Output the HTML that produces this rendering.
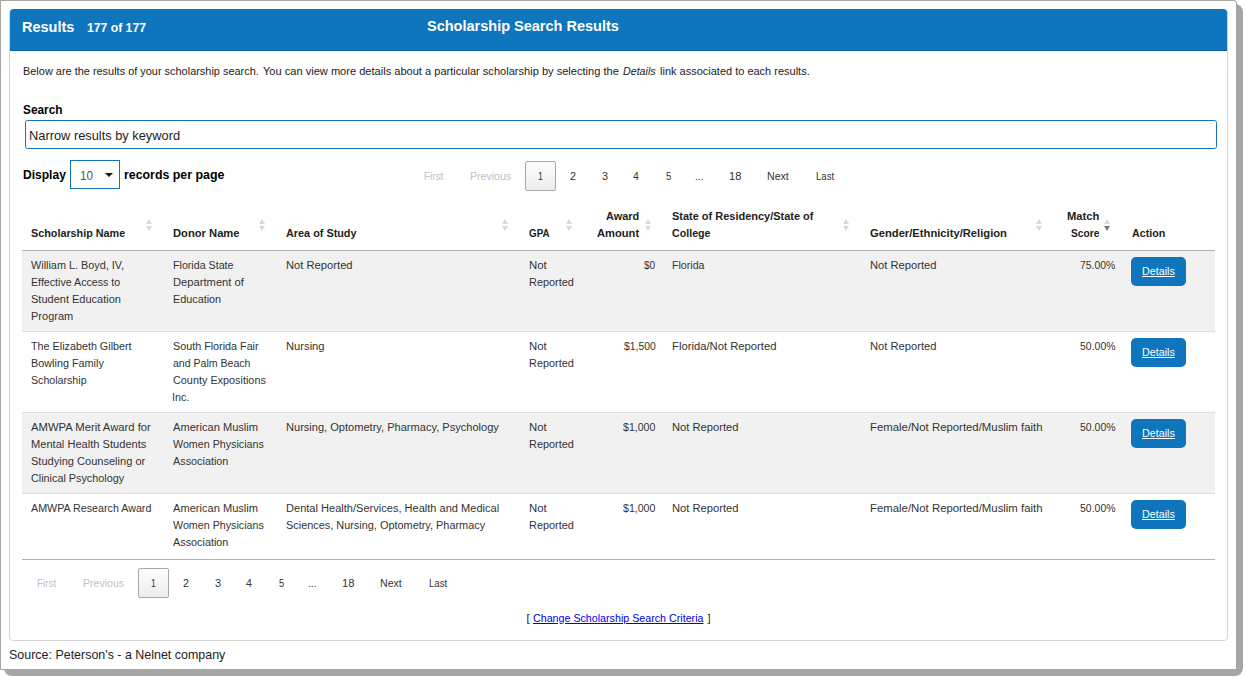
<!DOCTYPE html>
<html>
<head>
<meta charset="utf-8">
<title>Scholarship Search Results</title>
<style>
html,body{margin:0;padding:0;}
body{width:1247px;height:680px;position:relative;overflow:hidden;background:#fff;font-family:"Liberation Sans",sans-serif;color:#222;}
.t{position:absolute;white-space:nowrap;line-height:16px;transform-origin:0 50%;}
div{box-sizing:border-box;}
/* outer screenshot frame with drop shadow */
#shadow{position:absolute;left:4px;top:4px;width:1239px;height:672px;background:#a5a5a5;border-radius:8px;}
#frame{position:absolute;left:0;top:0;width:1237px;height:670px;background:#fff;border:1px solid #a5a5a5;border-top-right-radius:3px;}
/* panel */
#panel{position:absolute;left:9px;top:9px;width:1219px;height:632px;border:1px solid #d3d3d3;border-radius:4px;background:#fff;}
#phead{position:absolute;left:10px;top:9px;width:1217px;height:42px;background:#0f75bc;border-radius:4px 4px 0 0;border-bottom:1px solid #0b62a0;}
#inp{position:absolute;left:25px;top:120px;width:1192px;height:29px;border:1px solid #1272bc;border-radius:2.5px;background:#fff;}
#sel{position:absolute;left:70px;top:160px;width:50px;height:29px;border:1px solid #1272bc;border-radius:0;background:#fff;}
#sel:after{content:"";position:absolute;left:34px;top:11.6px;border-left:4.3px solid transparent;border-right:4.3px solid transparent;border-top:4.6px solid #111;}
.pgbox{position:absolute;width:31px;height:30px;border:1px solid #a8a8a8;border-radius:2px;background:linear-gradient(#fdfdfd,#ededed);}
.stripe{position:absolute;left:22px;width:1193px;background:#f1f1f1;}
.line{position:absolute;left:22px;width:1193px;height:1px;}
.btn{position:absolute;left:1131px;width:55px;height:29px;background:#0f75bc;border-radius:5px;}
.sort{position:absolute;width:8px;height:13px;}
.sort:before{content:"";position:absolute;left:0;top:0;border-left:3.75px solid transparent;border-right:3.75px solid transparent;border-bottom:5.6px solid #dadada;}
.sort:after{content:"";position:absolute;left:0;top:6.9px;border-left:3.75px solid transparent;border-right:3.75px solid transparent;border-top:5.6px solid #dadada;}
.sort.desc:after{border-top-color:#77777a;}
</style>
</head>
<body>
<div id="shadow"></div>
<div id="frame"></div>
<div id="panel"></div>
<div id="phead"></div>
<div id="inp"></div>
<div id="sel"></div>
<div class="pgbox" style="left:525px;top:161px;"></div>
<div class="pgbox" style="left:138px;top:568px;"></div>

<div class="sort" style="left:146px;top:219px;"></div>
<div class="sort" style="left:259px;top:219px;"></div>
<div class="sort" style="left:502px;top:219px;"></div>
<div class="sort" style="left:566px;top:219px;"></div>
<div class="sort" style="left:645px;top:219px;"></div>
<div class="sort" style="left:843px;top:219px;"></div>
<div class="sort" style="left:1036px;top:219px;"></div>
<div class="sort desc" style="left:1104px;top:219px;"></div>

<div class="line" style="top:250px;background:#b3b3b3;"></div>
<div class="stripe" style="top:251px;height:80px;"></div>
<div class="line" style="top:331px;background:#dedfe2;"></div>
<div class="line" style="top:412px;background:#dedfe2;"></div>
<div class="stripe" style="top:413px;height:80px;"></div>
<div class="line" style="top:493px;background:#dedfe2;"></div>
<div class="line" style="top:559px;background:#b3b3b3;"></div>

<div class="btn" style="top:257px;"></div>
<div class="btn" style="top:338px;"></div>
<div class="btn" style="top:419px;"></div>
<div class="btn" style="top:500px;"></div>

<div class="t" style="left:21.96px;top:18.6px;font-size:15.5px;color:#fff;font-weight:bold;transform:scaleX(0.9362);">Results</div>
<div class="t" style="left:86.70px;top:19.6px;font-size:12.7px;color:#fff;font-weight:bold;transform:scaleX(0.9608);">177 of 177</div>
<div class="t" style="left:426.60px;top:18.4px;font-size:15.5px;color:#fff;font-weight:bold;transform:scaleX(0.9359);">Scholarship Search Results</div>
<div class="t" style="left:22.50px;top:63.0px;font-size:10.75px;color:#222;transform:scaleX(1.0171);">Below are the results of your scholarship search.</div>
<div class="t" style="left:262.50px;top:63.0px;font-size:10.75px;color:#222;transform:scaleX(1.0295);">You can view more details about a particular scholarship by selecting the</div>
<div class="t" style="left:622.90px;top:63.0px;font-size:10.75px;color:#222;transform:scaleX(0.9915);font-style:italic;">Details</div>
<div class="t" style="left:660.00px;top:63.0px;font-size:10.75px;color:#222;transform:scaleX(1.0226);">link associated to each results.</div>
<div class="t" style="left:23.00px;top:102.1px;font-size:12.7px;color:#000;font-weight:bold;transform:scaleX(0.9322);">Search</div>
<div class="t" style="left:28.99px;top:127.6px;font-size:12.7px;color:#222;transform:scaleX(1.0107);">Narrow results by keyword</div>
<div class="t" style="left:23.00px;top:167.3px;font-size:13.6px;color:#000;font-weight:bold;transform:scaleX(0.8864);">Display</div>
<div class="t" style="left:80.00px;top:167.6px;font-size:12.7px;color:#555;transform:scaleX(0.9249);">10</div>
<div class="t" style="left:124.25px;top:167.3px;font-size:13.6px;color:#000;font-weight:bold;transform:scaleX(0.9098);">records per page</div>
<div class="t" style="left:36.60px;top:574.9px;font-size:11.7px;color:#c2c2c2;transform:scaleX(0.8521);">First</div>
<div class="t" style="left:423.60px;top:167.9px;font-size:11.7px;color:#c2c2c2;transform:scaleX(0.8521);">First</div>
<div class="t" style="left:83.10px;top:574.9px;font-size:11.7px;color:#c2c2c2;transform:scaleX(0.9051);">Previous</div>
<div class="t" style="left:470.10px;top:167.9px;font-size:11.7px;color:#c2c2c2;transform:scaleX(0.9051);">Previous</div>
<div class="t" style="left:151.00px;top:574.9px;font-size:11.7px;color:#333;transform:scaleX(0.7500);">1</div>
<div class="t" style="left:538.00px;top:167.9px;font-size:11.7px;color:#333;transform:scaleX(0.7500);">1</div>
<div class="t" style="left:182.70px;top:574.9px;font-size:11.7px;color:#333;transform:scaleX(0.9167);">2</div>
<div class="t" style="left:569.70px;top:167.9px;font-size:11.7px;color:#333;transform:scaleX(0.9167);">2</div>
<div class="t" style="left:214.70px;top:574.9px;font-size:11.7px;color:#333;transform:scaleX(0.9333);">3</div>
<div class="t" style="left:601.70px;top:167.9px;font-size:11.7px;color:#333;transform:scaleX(0.9333);">3</div>
<div class="t" style="left:246.00px;top:574.9px;font-size:11.7px;color:#333;transform:scaleX(0.9000);">4</div>
<div class="t" style="left:633.00px;top:167.9px;font-size:11.7px;color:#333;transform:scaleX(0.9000);">4</div>
<div class="t" style="left:279.00px;top:574.9px;font-size:11.7px;color:#333;transform:scaleX(0.8000);">5</div>
<div class="t" style="left:666.00px;top:167.9px;font-size:11.7px;color:#333;transform:scaleX(0.8000);">5</div>
<div class="t" style="left:307.93px;top:574.9px;font-size:11.7px;color:#333;transform:scaleX(0.8712);">...</div>
<div class="t" style="left:694.93px;top:167.9px;font-size:11.7px;color:#333;transform:scaleX(0.8712);">...</div>
<div class="t" style="left:341.60px;top:574.9px;font-size:11.7px;color:#333;transform:scaleX(0.9600);">18</div>
<div class="t" style="left:728.60px;top:167.9px;font-size:11.7px;color:#333;transform:scaleX(0.9600);">18</div>
<div class="t" style="left:379.60px;top:574.9px;font-size:11.7px;color:#333;transform:scaleX(0.9078);">Next</div>
<div class="t" style="left:766.60px;top:167.9px;font-size:11.7px;color:#333;transform:scaleX(0.9078);">Next</div>
<div class="t" style="left:428.70px;top:574.9px;font-size:11.7px;color:#333;transform:scaleX(0.8230);">Last</div>
<div class="t" style="left:815.70px;top:167.9px;font-size:11.7px;color:#333;transform:scaleX(0.8230);">Last</div>
<div class="t" style="left:30.70px;top:225.3px;font-size:11.7px;color:#222;font-weight:bold;transform:scaleX(0.9241);">Scholarship Name</div>
<div class="t" style="left:173.00px;top:225.3px;font-size:11.7px;color:#222;font-weight:bold;transform:scaleX(0.9573);">Donor Name</div>
<div class="t" style="left:285.90px;top:225.3px;font-size:11.7px;color:#222;font-weight:bold;transform:scaleX(0.9283);">Area of Study</div>
<div class="t" style="left:529.20px;top:225.3px;font-size:11.7px;color:#222;font-weight:bold;transform:scaleX(0.8394);">GPA</div>
<div class="t" style="left:606.30px;top:208.1px;font-size:11.7px;color:#222;font-weight:bold;transform:scaleX(0.9330);">Award</div>
<div class="t" style="left:597.10px;top:225.3px;font-size:11.7px;color:#222;font-weight:bold;transform:scaleX(0.9537);">Amount</div>
<div class="t" style="left:671.90px;top:208.1px;font-size:11.7px;color:#222;font-weight:bold;transform:scaleX(0.9384);">State of Residency/State of</div>
<div class="t" style="left:671.90px;top:225.3px;font-size:11.7px;color:#222;font-weight:bold;transform:scaleX(0.9131);">College</div>
<div class="t" style="left:869.90px;top:225.3px;font-size:11.7px;color:#222;font-weight:bold;transform:scaleX(0.9585);">Gender/Ethnicity/Religion</div>
<div class="t" style="left:1066.60px;top:208.1px;font-size:11.7px;color:#222;font-weight:bold;transform:scaleX(0.9546);">Match</div>
<div class="t" style="left:1070.50px;top:225.3px;font-size:11.7px;color:#222;font-weight:bold;transform:scaleX(0.8732);">Score</div>
<div class="t" style="left:1131.90px;top:225.3px;font-size:11.7px;color:#222;font-weight:bold;transform:scaleX(0.9167);">Action</div>
<div class="t" style="left:30.70px;top:257.2px;font-size:11.7px;color:#333;transform:scaleX(0.9270);">William L. Boyd, IV,</div>
<div class="t" style="left:30.70px;top:274.2px;font-size:11.7px;color:#333;transform:scaleX(0.9119);">Effective Access to</div>
<div class="t" style="left:30.70px;top:291.2px;font-size:11.7px;color:#333;transform:scaleX(0.9419);">Student Education</div>
<div class="t" style="left:30.70px;top:308.2px;font-size:11.7px;color:#333;transform:scaleX(0.9437);">Program</div>
<div class="t" style="left:173.00px;top:257.2px;font-size:11.7px;color:#333;transform:scaleX(0.9124);">Florida State</div>
<div class="t" style="left:173.00px;top:274.2px;font-size:11.7px;color:#333;transform:scaleX(0.9571);">Department of</div>
<div class="t" style="left:173.00px;top:291.2px;font-size:11.7px;color:#333;transform:scaleX(0.9246);">Education</div>
<div class="t" style="left:285.90px;top:257.2px;font-size:11.7px;color:#333;transform:scaleX(0.9578);">Not Reported</div>
<div class="t" style="left:644.30px;top:257.2px;font-size:11.7px;color:#333;transform:scaleX(0.8593);">$0</div>
<div class="t" style="left:672.30px;top:257.2px;font-size:11.7px;color:#333;transform:scaleX(0.9110);">Florida</div>
<div class="t" style="left:870.40px;top:257.2px;font-size:11.7px;color:#333;transform:scaleX(0.9563);">Not Reported</div>
<div class="t" style="left:1080.00px;top:257.2px;font-size:11.7px;color:#333;transform:scaleX(0.8918);">75.00%</div>
<div class="t" style="left:30.70px;top:338.2px;font-size:11.7px;color:#333;transform:scaleX(0.9218);">The Elizabeth Gilbert</div>
<div class="t" style="left:30.70px;top:355.2px;font-size:11.7px;color:#333;transform:scaleX(0.9270);">Bowling Family</div>
<div class="t" style="left:30.70px;top:372.2px;font-size:11.7px;color:#333;transform:scaleX(0.9096);">Scholarship</div>
<div class="t" style="left:173.00px;top:338.2px;font-size:11.7px;color:#333;transform:scaleX(0.9215);">South Florida Fair</div>
<div class="t" style="left:173.00px;top:355.2px;font-size:11.7px;color:#333;transform:scaleX(0.9031);">and Palm Beach</div>
<div class="t" style="left:173.00px;top:372.2px;font-size:11.7px;color:#333;transform:scaleX(0.9281);">County Expositions</div>
<div class="t" style="left:172.08px;top:389.2px;font-size:11.7px;color:#333;transform:scaleX(0.9209);">Inc.</div>
<div class="t" style="left:285.90px;top:338.2px;font-size:11.7px;color:#333;transform:scaleX(0.9579);">Nursing</div>
<div class="t" style="left:623.60px;top:338.2px;font-size:11.7px;color:#333;transform:scaleX(0.8911);">$1,500</div>
<div class="t" style="left:672.30px;top:338.2px;font-size:11.7px;color:#333;transform:scaleX(0.9631);">Florida/Not Reported</div>
<div class="t" style="left:870.40px;top:338.2px;font-size:11.7px;color:#333;transform:scaleX(0.9563);">Not Reported</div>
<div class="t" style="left:1080.00px;top:338.2px;font-size:11.7px;color:#333;transform:scaleX(0.8969);">50.00%</div>
<div class="t" style="left:30.70px;top:419.2px;font-size:11.7px;color:#333;transform:scaleX(0.9645);">AMWPA Merit Award for</div>
<div class="t" style="left:30.70px;top:436.2px;font-size:11.7px;color:#333;transform:scaleX(0.9495);">Mental Health Students</div>
<div class="t" style="left:30.70px;top:453.2px;font-size:11.7px;color:#333;transform:scaleX(0.9450);">Studying Counseling or</div>
<div class="t" style="left:30.70px;top:470.2px;font-size:11.7px;color:#333;transform:scaleX(0.9242);">Clinical Psychology</div>
<div class="t" style="left:173.00px;top:419.2px;font-size:11.7px;color:#333;transform:scaleX(0.9484);">American Muslim</div>
<div class="t" style="left:173.00px;top:436.2px;font-size:11.7px;color:#333;transform:scaleX(0.9152);">Women Physicians</div>
<div class="t" style="left:173.00px;top:453.2px;font-size:11.7px;color:#333;transform:scaleX(0.9263);">Association</div>
<div class="t" style="left:285.90px;top:419.2px;font-size:11.7px;color:#333;transform:scaleX(0.9462);">Nursing, Optometry, Pharmacy, Psychology</div>
<div class="t" style="left:622.90px;top:419.2px;font-size:11.7px;color:#333;transform:scaleX(0.9049);">$1,000</div>
<div class="t" style="left:672.20px;top:419.2px;font-size:11.7px;color:#333;transform:scaleX(0.9563);">Not Reported</div>
<div class="t" style="left:870.00px;top:419.2px;font-size:11.7px;color:#333;transform:scaleX(0.9727);">Female/Not Reported/Muslim faith</div>
<div class="t" style="left:1080.00px;top:419.2px;font-size:11.7px;color:#333;transform:scaleX(0.8969);">50.00%</div>
<div class="t" style="left:30.70px;top:500.2px;font-size:11.7px;color:#333;transform:scaleX(0.9159);">AMWPA Research Award</div>
<div class="t" style="left:173.00px;top:500.2px;font-size:11.7px;color:#333;transform:scaleX(0.9484);">American Muslim</div>
<div class="t" style="left:173.00px;top:517.2px;font-size:11.7px;color:#333;transform:scaleX(0.9152);">Women Physicians</div>
<div class="t" style="left:173.00px;top:534.2px;font-size:11.7px;color:#333;transform:scaleX(0.9263);">Association</div>
<div class="t" style="left:285.90px;top:500.2px;font-size:11.7px;color:#333;transform:scaleX(0.9456);">Dental Health/Services, Health and Medical</div>
<div class="t" style="left:285.90px;top:517.2px;font-size:11.7px;color:#333;transform:scaleX(0.9329);">Sciences, Nursing, Optometry, Pharmacy</div>
<div class="t" style="left:622.90px;top:500.2px;font-size:11.7px;color:#333;transform:scaleX(0.9049);">$1,000</div>
<div class="t" style="left:672.20px;top:500.2px;font-size:11.7px;color:#333;transform:scaleX(0.9563);">Not Reported</div>
<div class="t" style="left:870.00px;top:500.2px;font-size:11.7px;color:#333;transform:scaleX(0.9727);">Female/Not Reported/Muslim faith</div>
<div class="t" style="left:1080.00px;top:500.2px;font-size:11.7px;color:#333;transform:scaleX(0.8969);">50.00%</div>
<div class="t" style="left:529.20px;top:257.2px;font-size:11.7px;color:#333;transform:scaleX(0.9715);">Not</div>
<div class="t" style="left:529.20px;top:274.2px;font-size:11.7px;color:#333;transform:scaleX(0.9332);">Reported</div>
<div class="t" style="left:1142.30px;top:263.3px;font-size:11.7px;color:#fff;transform:scaleX(0.9197);text-decoration:underline;">Details</div>
<div class="t" style="left:529.20px;top:338.2px;font-size:11.7px;color:#333;transform:scaleX(0.9715);">Not</div>
<div class="t" style="left:529.20px;top:355.2px;font-size:11.7px;color:#333;transform:scaleX(0.9332);">Reported</div>
<div class="t" style="left:1142.30px;top:344.3px;font-size:11.7px;color:#fff;transform:scaleX(0.9197);text-decoration:underline;">Details</div>
<div class="t" style="left:529.20px;top:419.2px;font-size:11.7px;color:#333;transform:scaleX(0.9715);">Not</div>
<div class="t" style="left:529.20px;top:436.2px;font-size:11.7px;color:#333;transform:scaleX(0.9332);">Reported</div>
<div class="t" style="left:1142.30px;top:425.3px;font-size:11.7px;color:#fff;transform:scaleX(0.9197);text-decoration:underline;">Details</div>
<div class="t" style="left:529.20px;top:500.2px;font-size:11.7px;color:#333;transform:scaleX(0.9715);">Not</div>
<div class="t" style="left:529.20px;top:517.2px;font-size:11.7px;color:#333;transform:scaleX(0.9332);">Reported</div>
<div class="t" style="left:1142.30px;top:506.3px;font-size:11.7px;color:#fff;transform:scaleX(0.9197);text-decoration:underline;">Details</div>
<div class="t" style="left:526.60px;top:609.8px;font-size:11.0px;color:#222;">[</div>
<div class="t" style="left:532.70px;top:609.8px;font-size:11.0px;color:#0000ee;transform:scaleX(0.9713);text-decoration:underline;">Change Scholarship Search Criteria</div>
<div class="t" style="left:707.40px;top:609.8px;font-size:11.0px;color:#222;">]</div>
<div class="t" style="left:8.70px;top:646.5px;font-size:12.7px;color:#222;transform:scaleX(0.9819);">Source: Peterson's - a Nelnet company</div>
</body>
</html>
